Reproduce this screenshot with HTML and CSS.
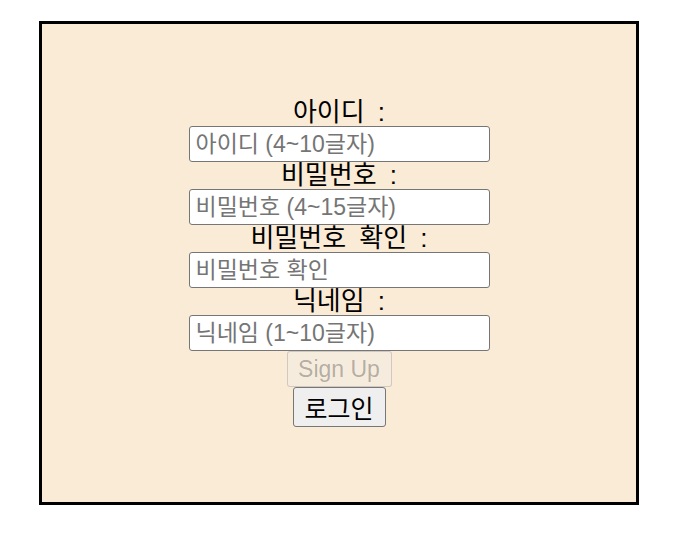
FILE: index.html
```html
<!DOCTYPE html>
<html lang="ko">
<head>
<meta charset="utf-8">
<title>회원가입</title>
<link rel="stylesheet" href="styles.css">
</head>
<body>
<div class="page">
  <form class="signup-box">
    <label class="field-label" for="uid">아이디 :</label>
    <input class="field-input" id="uid" type="text" placeholder="아이디 (4~10글자)">
    <label class="field-label" for="pw">비밀번호 :</label>
    <input class="field-input" id="pw" type="password" placeholder="비밀번호 (4~15글자)">
    <label class="field-label" for="pw2">비밀번호 확인 :</label>
    <input class="field-input" id="pw2" type="password" placeholder="비밀번호 확인">
    <label class="field-label" for="nick">닉네임 :</label>
    <input class="field-input" id="nick" type="text" placeholder="닉네임 (1~10글자)">
    <button class="btn btn-signup" type="submit" disabled>Sign Up</button>
    <button class="btn btn-login" type="button">로그인</button>
  </form>
</div>
</body>
</html>
```
FILE: styles.css
```css
html, body {
  margin: 0;
  padding: 0;
  background: #ffffff;
}

.page {
  display: flex;
  justify-content: center;
  padding-top: 21px;
  padding-left: 1px;
  font-family: "Liberation Sans", "Noto Sans CJK KR", sans-serif;
}

.signup-box {
  box-sizing: border-box;
  width: 600px;
  height: 484px;
  border: 3px solid #000;
  background: #faebd7;
  display: flex;
  flex-direction: column;
  align-items: center;
  justify-content: center;
  margin: 0;
}

.field-label {
  display: block;
  font-family: "Liberation Sans", "Noto Sans CJK KR", sans-serif;
  font-size: 26px;
  line-height: 27px;
  height: 27px;
  word-spacing: 6px;
  color: #000;
}

.field-input {
  box-sizing: border-box;
  width: 301px;
  height: 36px;
  margin: 0;
  padding: 0 6px;
  border: 1px solid #767676;
  border-radius: 3px;
  background: #fff;
  font-family: "Liberation Sans", "Noto Sans CJK KR", sans-serif;
  font-size: 23px;
  color: #000;
}

.field-input::placeholder {
  color: #757575;
  opacity: 1;
}

.btn {
  box-sizing: border-box;
  margin: 0;
  font-family: "Liberation Sans", "Noto Sans CJK KR", sans-serif;
  border-radius: 3px;
  padding: 0;
}

.btn-signup {
  height: 36px;
  width: 105px;
  font-size: 23px;
  color: rgba(16, 16, 16, 0.3);
  background: rgba(239, 239, 239, 0.3);
  border: 1px solid rgba(118, 118, 118, 0.3);
}

.btn-login {
  height: 40px;
  width: 93px;
  font-size: 25px;
  color: #000;
  background: #efefef;
  border: 1px solid #767676;
}
```
